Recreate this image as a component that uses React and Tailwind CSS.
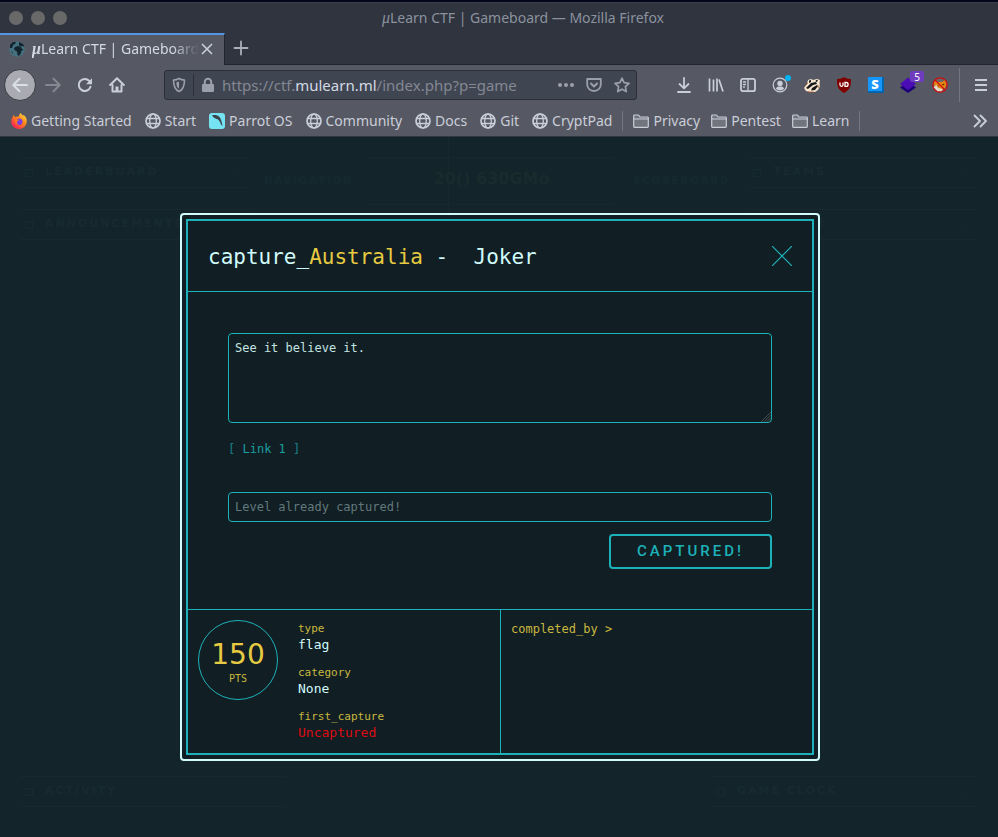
import React from "react";

const iconBtn = "flex size-8 shrink-0 items-center justify-center";

function Icon({ children, size = "size-4", className = "" }) {
  return (
    <svg
      viewBox="0 0 16 16"
      className={`${size} shrink-0 ${className}`}
      fill="none"
      stroke="currentColor"
      strokeWidth="2"
      strokeLinecap="round"
      strokeLinejoin="round"
      aria-hidden="true"
    >
      {children}
    </svg>
  );
}

function Mu({ bold }) {
  return (
    <span className={`font-['Liberation_Serif',serif] text-base italic ${bold ? "font-bold" : ""}`}>μ</span>
  );
}

function TitleBar() {
  return (
    <div className="flex h-[31px] items-center border-t border-[#3b3f4c] bg-[#2f343f] px-[9px]">
      <div className="flex gap-2">
        <button aria-label="Close window" className="size-[14px] rounded-full bg-[#696969]" />
        <button aria-label="Minimize window" className="size-[14px] rounded-full bg-[#696969]" />
        <button aria-label="Maximize window" className="size-[14px] rounded-full bg-[#696969]" />
      </div>
      <h1 className="flex-1 pr-[10px] text-center text-sm text-[#8b929e]">
        <Mu />Learn CTF | Gameboard — Mozilla Firefox
      </h1>
    </div>
  );
}

function TabStrip() {
  return (
    <div className="flex h-8 bg-[#2f343f]">
      <div className="flex w-[225px] items-center border-t-2 border-r border-t-[#5294e2] border-r-[#21252d] bg-[#565863] pb-[2px] pl-[9px] pr-[9px]">
        <svg viewBox="0 0 16 16" className="size-4 shrink-0" aria-hidden="true">
          <circle cx="8" cy="8" r="7.8" fill="#44707f" />
          <path d="M1 4l3-3 3 0-1 2-2 1-1 3-2 0zM6 6l3-1 3 1 1 2 1.5 0-2 2-1 3-1.500 2-1.500-1-.5-3.500-2-1L5 7.500zM10 1l4 2 1.500 3-2-1-2 .5-1.500-1zM2 10l1.500 1 .5 2z" fill="#12242e" />
        </svg>
        <span className="ml-[7px] whitespace-nowrap text-sm text-[#d3dae3] [mask-image:linear-gradient(to_right,black_84%,transparent_100%)]">
          <Mu bold />Learn CTF | Gameboard
        </span>
        <button aria-label="Close tab" className="ml-auto flex size-4 shrink-0 items-center justify-center text-[#c6ccd6]">
          <Icon><path d="M3.500 3.500l9 9M12.500 3.500l-9 9" strokeWidth="1.7" /></Icon>
        </button>
      </div>
      <div className="flex flex-1 items-center border-b border-[#21252d] pb-px">
        <button aria-label="New tab" className={iconBtn + " text-[#a9b0bb]"}>
          <Icon><path d="M8 1.500v13M1.500 8h13" strokeWidth="1.800" /></Icon>
        </button>
      </div>
    </div>
  );
}

function UrlBar() {
  return (
    <div className="mx-[31px] flex h-[30px] min-w-0 flex-1 items-center rounded-[3px] border border-[#2b2e39] bg-[#404552] text-[#9aa0ab]">
      <button aria-label="Tracking protection" className="flex w-7 shrink-0 items-center justify-center">
        <Icon>
          <path d="M8 1.500C6.500 2.500 4.500 3 2.500 3c0 5 .8 9.500 5.500 11.500C12.700 12.500 13.500 8 13.500 3c-2 0-4-.5-5.500-1.500z" strokeWidth="1.600" />
          <path d="M8 4.500c-1 .5-1.700.8-2.700.9.200 3.400 1 5.200 2.700 6.300z" fill="currentColor" stroke="none" />
        </Icon>
      </button>
      <span className="h-[22px] w-px bg-[#2b2e39]" />
      <span className="flex w-7 shrink-0 justify-center">
        <Icon>
          <path d="M4.800 7V5a3.200 3.200 0 016.400 0v2" />
          <rect x="2" y="7" width="12" height="8" rx="1" fill="currentColor" stroke="none" />
        </Icon>
      </span>
      <div className="flex min-w-0 flex-1 overflow-hidden whitespace-nowrap text-[15px] text-[#838893]">
        <span>https://ctf.</span>
        <span className="text-[#d3dae3]">mulearn.ml</span>
        <span>/index.php?p=game</span>
      </div>
      <div className="flex shrink-0 items-center gap-3 pr-[6px]">
        <button aria-label="Page actions">
          <Icon><path d="M2 8h.01M8 8h.01M14 8h.01" strokeWidth="4" /></Icon>
        </button>
        <button aria-label="Save to Pocket">
          <Icon>
            <path d="M1.200 2h13.600v5.500a6.800 6.500 0 01-13.600 0z" strokeWidth="1.800" />
            <path d="M5 6.500l3 3 3-3" />
          </Icon>
        </button>
        <button aria-label="Bookmark this page">
          <Icon>
            <path d="M8 1.200l2.100 4.500 4.900.6-3.600 3.400.9 4.900L8 12.200l-4.300 2.400.9-4.900L1 6.300l4.900-.6z" strokeWidth="1.700" />
          </Icon>
        </button>
      </div>
    </div>
  );
}

function Toolbar() {
  return (
    <div className="flex h-10 items-center pl-1 pr-px text-[#c9ced8]">
      <button aria-label="Back" className={iconBtn + " rounded-full border border-[#3a3b44] bg-[#aaabb0] text-[#d9dfe6]"}>
        <Icon><path d="M15 8H1.500M7.500 1.800L1.300 8l6.200 6.200" /></Icon>
      </button>
      <button aria-label="Forward" className={iconBtn + " ml-px text-[#858791]"}>
        <Icon><path d="M1 8h13.500M8.500 1.800L14.700 8l-6.200 6.200" /></Icon>
      </button>
      <button aria-label="Reload" className={iconBtn}>
        <Icon>
          <path d="M13.500 9.800A6 6 0 1112.300 4" />
          <path d="M15 1.200v6H9z" fill="currentColor" stroke="none" />
        </Icon>
      </button>
      <button aria-label="Home" className={iconBtn}>
        <Icon>
          <path d="M1.200 8L8 1.300 14.800 8" />
          <path d="M3.500 8v6.500h9V8" />
          <path d="M6.500 15V9.500h3V15z" fill="currentColor" stroke="none" />
        </Icon>
      </button>
      <UrlBar />
      <button aria-label="Downloads" className={iconBtn}>
        <Icon><path d="M8 1v10M3.500 7L8 11.300 12.500 7M2 15h12" strokeWidth="1.800" /></Icon>
      </button>
      <button aria-label="Library" className={iconBtn}>
        <Icon><path d="M1.500 1.500v13M5.500 2.500v12M9 1.500v13M11 2.500l4 12" strokeWidth="1.700" strokeLinecap="butt" /></Icon>
      </button>
      <button aria-label="Sidebars" className={iconBtn}>
        <Icon>
          <rect x="1" y="1.800" width="14" height="12.400" rx="2" strokeWidth="1.800" />
          <path d="M8 2v12M3.500 5h2M3.500 7.500h2M3.500 10h1" strokeWidth="1.300" />
        </Icon>
      </button>
      <button aria-label="Account" className={iconBtn + " relative"}>
        <Icon>
          <circle cx="8" cy="8" r="6.800" strokeWidth="1.200" />
          <circle cx="8" cy="6.500" r="2.700" fill="currentColor" stroke="none" />
          <path d="M3.800 11.500c1-1.800 2.500-2 4.200-2s3.200.2 4.200 2C11.200 12.800 9.700 13.500 8 13.500s-3.200-.7-4.200-2z" fill="currentColor" stroke="none" />
        </Icon>
        <span className="absolute right-[5px] top-[6px] size-[6px] rounded-full bg-[#00b3f4]" />
      </button>
      <button aria-label="Privacy Badger" className={iconBtn}>
        <svg viewBox="0 0 16 16" className="size-4" aria-hidden="true">
          <path d="M0 11l3-4 1-4 3-1 2 1 4-1 3 1-.5 3 .5 3-2 4-3 2-5 0-4-1z" fill="#f6e6cf" />
          <path d="M2 11l5-5 5-1 1 2-4 1-5 4zM5 3.500l2-.5 0 2-2 1zM12 3l2 .3-1 1.700-1.500-.5zM8 11l5-3 1 1-3 4-4 .5z" fill="#15171a" />
          <path d="M1 9l3-3M4 15h6M14 11l1-3" stroke="#a85420" strokeWidth=".7" />
        </svg>
      </button>
      <button aria-label="uBlock Origin" className={iconBtn}>
        <svg viewBox="0 0 16 16" className="size-4" aria-hidden="true">
          <path d="M8 0c2 1.500 4.500 2 7 2 0 7-.8 10.500-7 14C1.800 12.500 1 9 1 2c2.500 0 5-.5 7-2z" fill="#800000" />
          <path d="M4 5.500v2.300a1.500 1.500 0 003 0V5.500" fill="none" stroke="#fff" strokeWidth="1.300" />
          <path d="M9 5.500v3.800h1.200a1.900 1.900 0 000-3.800z" fill="none" stroke="#fff" strokeWidth="1.300" />
        </svg>
      </button>
      <button aria-label="Stylus" className={iconBtn}>
        <span className="flex size-4 items-center justify-center rounded-[1px] border-r-2 border-b-2 border-[#0166ae] bg-[#1496fb] text-[13px] font-black leading-none text-white">S</span>
      </button>
      <button aria-label="Containers, 5" className={iconBtn + " relative"}>
        <svg viewBox="0 0 16 16" className="size-4" aria-hidden="true">
          <path d="M0 10.500L8 5l8 5.500L8 16z" fill="#1d0077" />
          <path d="M0 7l8-6.500L16 7l-8 6z" fill="#4a0cb5" />
        </svg>
        <span className="absolute right-0 top-[2px] flex h-[11px] w-[14px] items-center justify-center rounded-[2px] bg-[#6f3cc0] text-[10px] leading-none text-white">5</span>
      </button>
      <button aria-label="FoxyProxy disabled" className={iconBtn}>
        <svg viewBox="0 0 16 16" className="size-4" aria-hidden="true">
          <circle cx="8" cy="8" r="7" fill="#6b6468" />
          <path d="M2 7l1-4 3 2 4 0 3-2 1.500 4-1.500 4-4 3-5-1z" fill="#e98411" />
          <path d="M1.500 10l3-2 2 3 4 1-1 2.500-4 0z" fill="#e4dccb" />
          <path d="M9.500 7.500l3-1-1 2zM6 8l1 1.500-1.500 0z" fill="#5b2d05" />
          <circle cx="8" cy="8" r="7.200" fill="none" stroke="#d00d0d" strokeWidth="1.200" />
          <path d="M3 3l10 10" stroke="#d00d0d" strokeWidth="1.300" />
        </svg>
      </button>
      <span className="ml-[3px] h-[34px] w-px shrink-0 bg-[#73757f]" />
      <button aria-label="Menu" className={iconBtn + " ml-[5px]"}>
        <Icon><path d="M2 3h12M2 8h12M2 13h12" strokeLinecap="butt" /></Icon>
      </button>
    </div>
  );
}

function Globe() {
  return (
    <Icon>
      <circle cx="8" cy="8" r="7" strokeWidth="1.700" />
      <ellipse cx="8" cy="8" rx="3.300" ry="7" strokeWidth="1.300" />
      <path d="M1.500 5.500h13M1.500 10.500h13" strokeWidth="1.300" />
    </Icon>
  );
}

function Folder() {
  return (
    <Icon>
      <path d="M.7 13.500V2.800c0-.5.300-.8.800-.8h4l1.500 2h7.500c.5 0 .8.300.8.800v8.700c0 .5-.3.800-.8.800h-13c-.5 0-.8-.3-.8-.8z" strokeWidth="1.200" fill="#72747e" />
      <path d="M1 6h14" strokeWidth="1" />
    </Icon>
  );
}

function FirefoxLogo() {
  return (
    <svg viewBox="0 0 16 16" className="size-4 shrink-0" aria-hidden="true">
      <defs>
        <linearGradient id="ff" x1="1" y1="0" x2=".2" y2="1">
          <stop offset="0" stopColor="#fff14f" />
          <stop offset=".45" stopColor="#ff8a16" />
          <stop offset="1" stopColor="#ff1a5a" />
        </linearGradient>
      </defs>
      <path d="M9.500 0c1 1 2 1.800 2.500 3 .3-.5.200-1 .2-1.200C15 3.500 16 6 15.700 9c-.4 4-3.700 7-7.700 7S.3 13 .3 9c0-2 .5-4 1.700-5.500V2l2.500 2C5.500 3.500 6.500 3.400 8 3.500 8 2 8.600.8 9.500 0z" fill="url(#ff)" />
      <circle cx="8.200" cy="8.700" r="3.300" fill="#7a3fe0" />
      <path d="M4 6c1.500-.3 2.500 0 4 1.200-1 .3-1.800.8-2 1.800-.2 1.200.5 2 1.500 2.600C5 12 3.500 9 4 6z" fill="#ff7a1c" />
    </svg>
  );
}

function ParrotLogo() {
  return (
    <svg viewBox="0 0 16 16" className="size-4 shrink-0" aria-hidden="true">
      <rect width="16" height="16" rx="3" fill="#76e3f2" />
      <path d="M3 2.500C5.500 1.500 8.500 2 10.500 4c1.500 1.800 2.200 4.500 3 9-1.200-1-1.800-2-2.200-3.300C10.500 8 9.500 7 8.500 6.300 8 5.800 7.500 6.300 7 6 6 5 4 4.500 3 2.500z" fill="#3c4450" />
      <path d="M4.200 4.500c1 .4 1.800.9 2.300 1.500L5 5.800z" fill="#76e3f2" />
    </svg>
  );
}

const bookmarks = [
  { label: "Getting Started", icon: <FirefoxLogo /> },
  { label: "Start", icon: <Globe /> },
  { label: "Parrot OS", icon: <ParrotLogo /> },
  { label: "Community", icon: <Globe /> },
  { label: "Docs", icon: <Globe /> },
  { label: "Git", icon: <Globe /> },
  { label: "CryptPad", icon: <Globe /> },
];

function Bookmark({ label, icon }) {
  return (
    <a href="#" className="flex shrink-0 items-center gap-1 text-[#c9ced8]">
      {icon}
      <span>{label}</span>
    </a>
  );
}

function BookmarksBar() {
  return (
    <nav aria-label="Bookmarks" className="flex h-8 items-center gap-[13px] border-b border-[#2f3742] pl-[11px] pr-[10px] text-sm">
      {bookmarks.map((b) => (
        <Bookmark key={b.label} {...b} />
      ))}
      <span className="-mx-[3px] h-5 w-px bg-[#73757f]" />
      <div className="flex gap-[11px]">
        {["Privacy", "Pentest", "Learn"].map((l) => (
          <Bookmark key={l} label={l} icon={<Folder />} />
        ))}
      </div>
      <span className="-mx-[3px] h-5 w-px bg-[#73757f]" />
      <button aria-label="More bookmarks" className="ml-auto text-[#c9ced8]">
        <Icon><path d="M2.500 2.500L8 8l-5.500 5.500M8.500 2.500L14 8l-5.500 5.500" strokeWidth="1.800" /></Icon>
      </button>
    </nav>
  );
}

function Panel({ title }) {
  return (
    <section className="flex h-[31px] items-center border-y border-[#17282f] px-[5px] text-[#182a31]">
      <span className="size-2 border border-current" />
      <h2 className="ml-3 flex-1 whitespace-nowrap font-['DejaVu_Sans',sans-serif] text-[11px] font-bold tracking-[2px]">{title}</h2>
      <svg viewBox="0 0 16 10" className="h-2 w-4" fill="none" stroke="currentColor" aria-hidden="true">
        <path d="M1 1l7 7 7-7" />
      </svg>
    </section>
  );
}

function Gameboard() {
  return (
    <div className="flex h-full flex-col justify-between overflow-hidden px-5 pt-5 pb-[30px]" aria-hidden="true">
      <div className="grid grid-cols-[230fr_119fr_247fr_134fr_230fr] font-['DejaVu_Sans',sans-serif] text-[10px] font-bold tracking-[2px] text-[#152930]">
        <div className="flex flex-col gap-[21px]">
          <Panel title="LEADERBOARD" />
          <Panel title="ANNOUNCEMENTS" />
        </div>
        <p className="pt-4 text-center">NAVIGATION</p>
        <div className="relative flex h-12 items-center justify-center border-y border-[#17282f] pb-1 text-base tracking-normal text-[#1a2a2d]">
          <span className="absolute -top-5 left-20 h-[76px] w-px bg-[#17282f]" />
          20() 630GMo
        </div>
        <p className="pt-4 text-center">SCOREBOARD</p>
        <div className="flex flex-col gap-[21px]">
          <Panel title="TEAMS" />
          <Panel title="FILTER" />
        </div>
      </div>
      <div className="flex justify-between">
        <div className="w-[266px]"><Panel title="ACTIVITY" /></div>
        <div className="w-[266px]"><Panel title="GAME CLOCK" /></div>
      </div>
    </div>
  );
}

function Fact({ label, value, className = "text-[#d0fbfa]" }) {
  return (
    <div>
      <dt className="text-[11px] leading-4 text-[#c9b840]">{label}</dt>
      <dd className={`text-[13px] leading-4 ${className}`}>{value}</dd>
    </div>
  );
}

function CaptureModal() {
  return (
    <div
      role="dialog"
      aria-labelledby="capture-title"
      className="w-full max-w-[640px] rounded-[4px] border-2 border-[#d0fbfa] bg-[#111e23] p-1 font-['DejaVu_Sans_Mono',monospace] text-[#d0fbfa]"
    >
      <div className="border-2 border-[#1db2b9]">
        <header className="flex h-[71px] items-center justify-between border-b border-[#1db2b9] px-5">
          <h2 id="capture-title" className="whitespace-pre pt-1 text-[21px]">
            capture_<span className="text-[#e6cb42]">Australia</span> -  Joker
          </h2>
          <button aria-label="Close" className="text-[#1db2b9]">
            <svg viewBox="0 0 20 20" className="size-5" fill="none" stroke="currentColor" strokeWidth="1.200" aria-hidden="true">
              <path d="M0 0l20 20M20 0L0 20" />
            </svg>
          </button>
        </header>

        <form className="px-10 pt-[41px] pb-10 text-xs" onSubmit={(e) => e.preventDefault()}>
          <div className="relative">
            <textarea
              aria-label="Challenge description"
              readOnly
              defaultValue="See it believe it."
              className="block h-[90px] w-full resize-none rounded-[4px] border border-[#1db2b9] bg-transparent px-[6px] py-[6px] leading-4 text-[#c3e5e2] outline-none"
            />
            <svg viewBox="0 0 11 11" className="absolute bottom-px right-px size-[10px]" stroke="#5a5f61" strokeWidth=".8" aria-hidden="true">
              <path d="M0 11L11 0M3 11l8-8M6 11l5-5M9 11l2-2" />
            </svg>
          </div>
          <p className="mt-[18px] leading-4 text-[#1a8087]">
            [ <a href="#" className="text-[#1a9ea0]">Link 1</a> ]
          </p>
          <input
            aria-label="Answer"
            placeholder="Level already captured!"
            className="mt-[35px] block h-[30px] w-full rounded-[4px] border border-[#1db2b9] bg-transparent px-[6px] outline-none placeholder:text-[#61797c]"
          />
          <div className="mt-3 flex justify-end">
            <button className="h-[35px] w-[163px] rounded-[4px] border-2 border-[#1db2b9] font-[Roboto,sans-serif] text-[15px] font-medium tracking-[3px] text-[#1db2b9]">
              CAPTURED!
            </button>
          </div>
        </form>

        <footer className="grid h-36 grid-cols-2 border-t border-[#1db2b9]">
          <div className="flex gap-5 pl-[10px] pt-[10px]">
            <div className="flex size-20 flex-col items-center rounded-full border border-[#1db2b9] text-[#e6cb42]">
              <span className="mt-[18px] font-['DejaVu_Sans',sans-serif] text-[28px] leading-8">150</span>
              <span className="text-[10px] leading-4 text-[#c9b840]">PTS</span>
            </div>
            <dl className="flex flex-col gap-3 pt-px">
              <Fact label="type" value="flag" />
              <Fact label="category" value="None" />
              <Fact label="first_capture" value="Uncaptured" className="text-[#dc0c14]" />
            </dl>
          </div>
          <div className="border-l border-[#1db2b9] px-[10px] pt-[11px] text-xs text-[#c9b840]">completed_by &gt;</div>
        </footer>
      </div>
    </div>
  );
}

export default function App() {
  return (
    <div className="flex min-h-screen flex-col border-t-2 border-[#02071c] bg-[#14242b] font-['Noto_Sans',sans-serif]">
      <div className="bg-[#565863]">
        <TitleBar />
        <TabStrip />
        <Toolbar />
        <BookmarksBar />
      </div>
      <main className="relative grid flex-1">
        <Gameboard />
        <div className="absolute inset-0 flex items-center justify-center pl-[2px]">
          <CaptureModal />
        </div>
      </main>
    </div>
  );
}
